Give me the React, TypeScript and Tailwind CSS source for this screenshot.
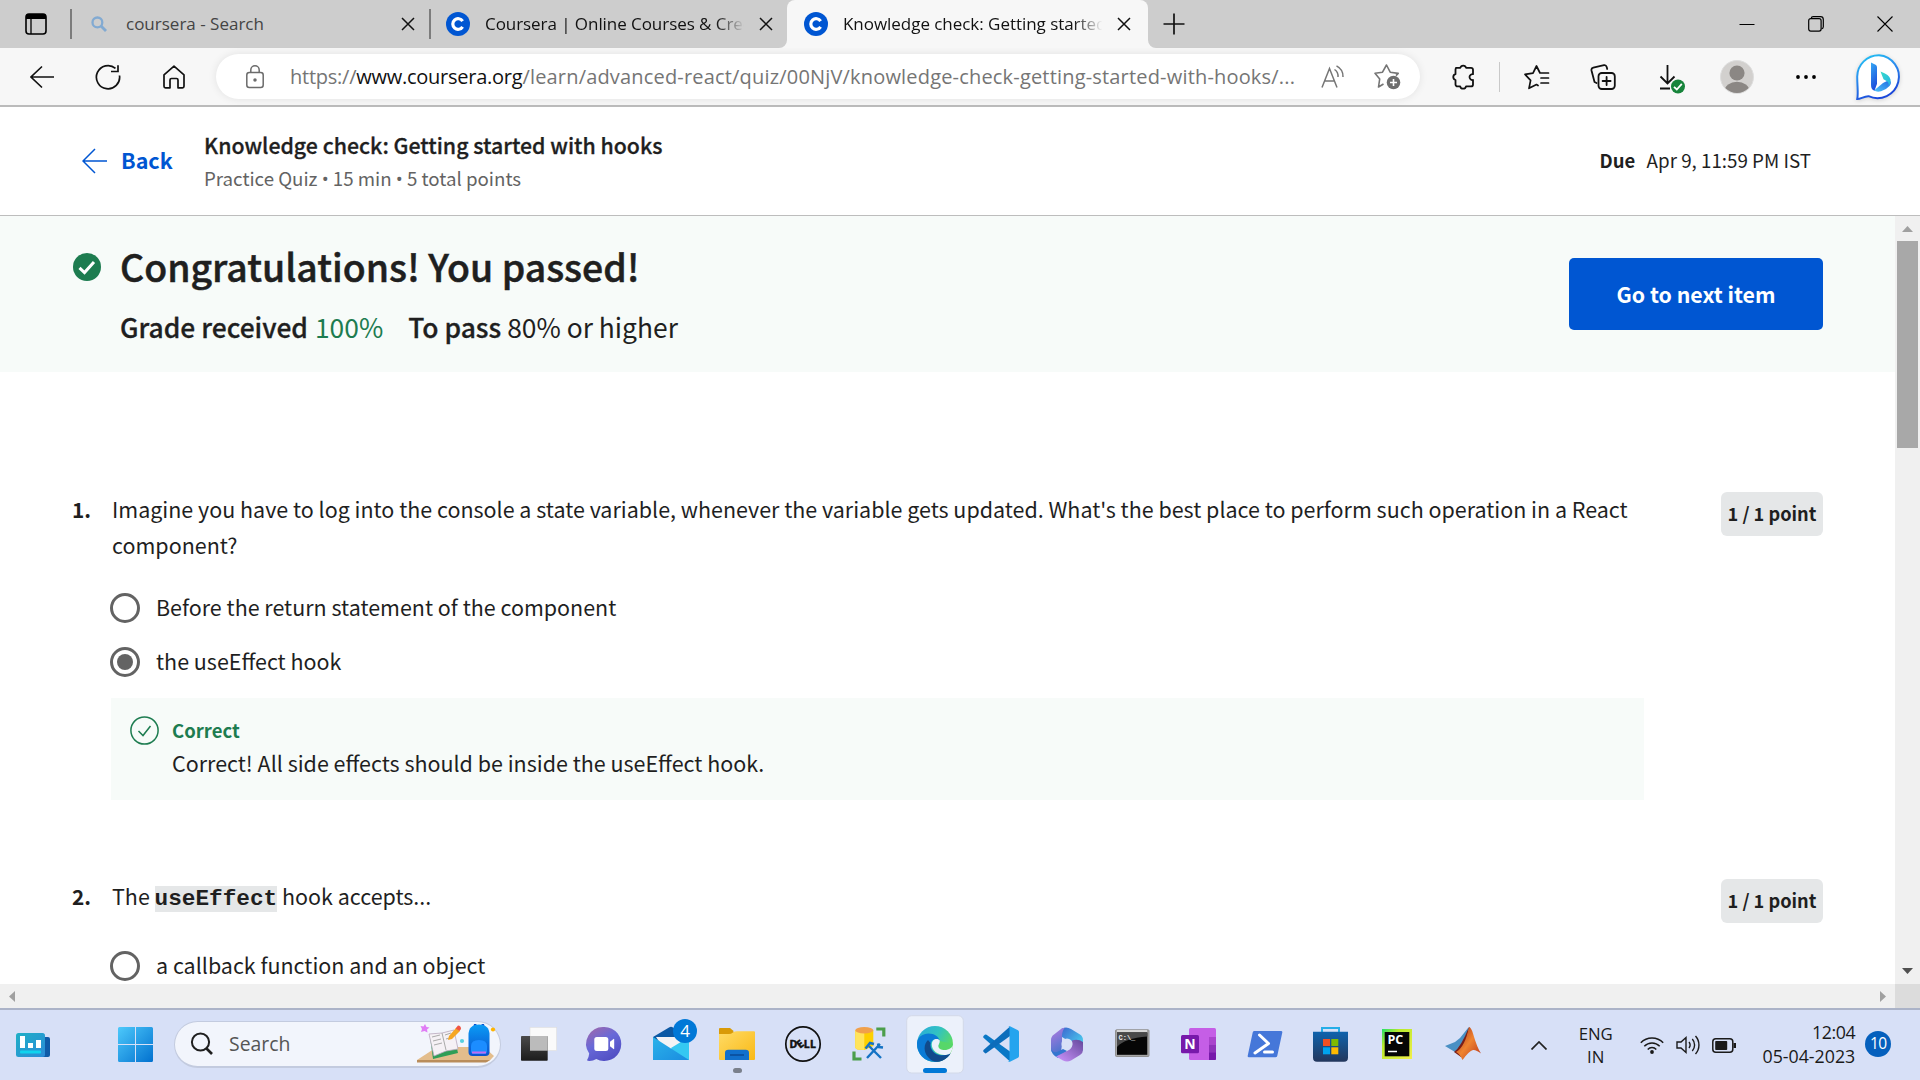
import type { ReactNode } from "react";

const X = ({ className = "" }: { className?: string }) => (
  <svg viewBox="0 0 14 14" className={`h-3.5 w-3.5 shrink-0 ${className}`} fill="none" stroke="#111" strokeWidth="1.5">
    <path d="M1 1l12 12M13 1L1 13" />
  </svg>
);

const CourseraIcon = () => (
  <svg viewBox="0 0 24 24" className="h-6 w-6 shrink-0">
    <circle cx="12" cy="12" r="12" fill="#0056d2" />
    <path d="M16.6 9.2A5.3 5.3 0 1 0 16.6 14.8" fill="none" stroke="#fff" strokeWidth="3.2" />
  </svg>
);

function TabStrip() {
  return (
    <div className="flex h-12 shrink-0 items-center bg-[#cdcdcd] text-[17px] text-[#111]">
      <svg viewBox="0 0 22 22" className="ml-[25px] h-[22px] w-[22px] shrink-0">
        <rect x="1" y="1" width="20" height="20" rx="3" fill="none" stroke="#000" strokeWidth="1.6" />
        <path d="M1 6V4a3 3 0 0 1 3-3h14a3 3 0 0 1 3 3v2z" fill="#000" />
        <path d="M6 6v15" stroke="#000" strokeWidth="1.3" />
      </svg>
      <div className="ml-[23px] h-[30px] w-0.5 bg-[#7c7c7c]" />
      <svg viewBox="0 0 16 16" className="ml-[19px] h-4 w-4 shrink-0" fill="none" stroke="#82aad2">
        <circle cx="6.4" cy="6.4" r="4.9" strokeWidth="2.3" />
        <path d="M10 10l5 5" strokeWidth="2.8" />
      </svg>
      <span className="ml-[19px] w-[275px] whitespace-nowrap leading-6 text-[#444]">coursera - Search</span>
      <X />
      <div className="ml-[14px] h-[30px] w-0.5 bg-[#7c7c7c]" />
      <div className="ml-[15px]"><CourseraIcon /></div>
      <span className="ml-[15px] w-[262px] overflow-hidden whitespace-nowrap leading-6 tracking-[-0.06px] [mask-image:linear-gradient(to_right,black_88%,transparent_99%)]">
        Coursera | Online Courses &amp; Credentials
      </span>
      <X className="ml-3" />
      <div className="relative ml-[14px] flex h-12 w-[361px] items-center rounded-t-lg bg-[#f7f7f7] pl-[17px]">
        <svg viewBox="0 0 8 8" className="absolute -left-2 bottom-0 h-2 w-2"><path d="M8 0v8H0a8 8 0 0 0 8-8" fill="#f7f7f7" /></svg>
        <svg viewBox="0 0 8 8" className="absolute -right-2 bottom-0 h-2 w-2"><path d="M0 0v8h8a8 8 0 0 1-8-8" fill="#f7f7f7" /></svg>
        <CourseraIcon />
        <span className="ml-[15px] w-[262px] overflow-hidden whitespace-nowrap leading-6 tracking-[-0.04px] [mask-image:linear-gradient(to_right,black_88%,transparent_99%)]">
          Knowledge check: Getting started with hooks
        </span>
        <X className="ml-[12px]" />
      </div>
      <svg viewBox="0 0 22 22" className="ml-[15px] h-[22px] w-[22px]" stroke="#111" strokeWidth="1.7"><path d="M11 0.5v21M0.5 11h21" /></svg>
      <div className="ml-auto flex items-center pr-[27px]">
        <svg viewBox="0 0 16 16" className="h-4 w-4" stroke="#000"><path d="M0.5 8.5h15" /></svg>
        <svg viewBox="0 0 16 16" className="ml-[53px] h-4 w-4" fill="none" stroke="#000" strokeWidth="1.2">
          <rect x="0.7" y="2.7" width="12.4" height="12.4" rx="2" />
          <path d="M3.2 2.4C3.4 1 4.3.7 5.2.7h7.3a2.8 2.8 0 0 1 2.8 2.8v7.3c0 1-.5 1.9-1.7 2" />
        </svg>
        <svg viewBox="0 0 16 16" className="ml-[53px] h-4 w-4" stroke="#000" strokeWidth="1.1"><path d="M.5.5l15 15M15.5.5l-15 15" /></svg>
      </div>
    </div>
  );
}

function Toolbar() {
  return (
    <div className="flex h-[59px] shrink-0 items-center border-b-2 border-[#bbb] bg-[#f7f7f7]">
      <svg viewBox="0 0 24 24" className="ml-[30px] h-6 w-6 shrink-0" fill="none" stroke="#111" strokeWidth="1.6"><path d="M12 1.5L1 12l11 10.5M1 12h23" /></svg>
      <svg viewBox="0 0 26 26" className="ml-[41px] h-[26px] w-[26px] shrink-0" fill="none" stroke="#111" strokeWidth="1.7">
        <path d="M24.5 11.5A11.6 11.6 0 1 1 20.5 4.3M23 1.200v6.300h-7" />
      </svg>
      <svg viewBox="0 0 22 24" className="ml-[42px] h-6 w-[22px] shrink-0" fill="none" stroke="#111" strokeWidth="1.7" strokeLinejoin="round">
        <path d="M1 9.8L11 1.2l10 8.6v11.5a1.5 1.5 0 0 1-1.500 1.500H15V15a1.500 1.500 0 0 0-1.500-1.500h-5A1.500 1.500 0 0 0 7 15v7.800H2.500A1.500 1.500 0 0 1 1 21.300z" />
      </svg>
      <div className="ml-[31px] flex h-[45px] w-[1204px] shrink-0 items-center rounded-full bg-white pl-[30px] shadow-[0_0_8px_rgba(0,0,0,0.09)]">
        <svg viewBox="0 0 18 24" className="h-6 w-[18px] shrink-0" fill="none" stroke="#6b6b6b" strokeWidth="1.5">
          <rect x=".8" y="7.5" width="16.4" height="15" rx="2.5" />
          <path d="M4.8 7.5V5a4.2 4.2 0 0 1 8.4 0v2.5" />
          <circle cx="9" cy="15" r="1" fill="#6b6b6b" />
        </svg>
        <div className="ml-[26px] w-[1007px] whitespace-nowrap text-[20px] leading-8 text-[#757575]">
          <span className="tracking-[-0.25px]">https://<span className="text-[#111]">www.coursera.org</span></span>
          <span className="tracking-[0.18px]">/learn/advanced-react/quiz/00NjV/knowledge-check-getting-started-with-hooks/...</span>
        </div>
        <svg viewBox="0 0 24 24" className="ml-[24px] h-6 w-6 shrink-0" fill="none" stroke="#757575" strokeWidth="1.5">
          <path d="M1 22.5L8.5 3.5 16 22.5M3.6 16h9.8M13.5 4.5a8 8 0 0 1 3.500 7.500M15.500.8A12 12 0 0 1 22 12" />
        </svg>
        <svg viewBox="0 0 27 27" className="ml-[29px] h-[27px] w-[27px] shrink-0" fill="none" stroke="#757575" strokeWidth="1.6" strokeLinejoin="round">
          <path d="M9.5 21l-5 3 1.2-8L1 10.3l7.5-1.1L12.5 2l3.700 7.200 8 1.200-2.200 2.200" />
          <circle cx="19.5" cy="19.5" r="6.8" fill="#6e6e6e" stroke="none" />
          <path d="M19.5 16v7M16 19.500h7" stroke="#fff" />
        </svg>
      </div>
      <svg viewBox="0 0 24 26" className="ml-[31px] h-[26px] w-6 shrink-0" fill="none" stroke="#111" strokeWidth="1.8" strokeLinejoin="round">
        <path d="M5 3.800h4.300a3 3 0 0 1 5.800 0H20a2 2 0 0 1 2 2v4.400a3 3 0 0 0-3.500 2.900 3 3 0 0 0 3.500 2.900v4.400a2 2 0 0 1-2 2h-5a3 3 0 0 1-5.800 0H6.500a2 2 0 0 1-2-2V16a3 3 0 0 1 0-5.800V5.500z" />
      </svg>
      <div className="ml-[24px] h-[30px] w-px bg-[#c9c9c9]" />
      <svg viewBox="0 0 26 26" className="ml-[24px] h-[26px] w-[26px] shrink-0" fill="none" stroke="#111" strokeWidth="1.7" strokeLinejoin="round" strokeLinecap="round">
        <path d="M14 21.500l-1.500-.9L5 24.300l1.600-8L1 10.300l8-1.200L12.500 2l3.500 7h8.500M17 14h7.500M17 19h7.500" />
      </svg>
      <svg viewBox="0 0 26 26" className="ml-[40px] h-[26px] w-[26px] shrink-0" fill="none" stroke="#111" strokeWidth="1.8" strokeLinecap="round">
        <path d="M6.500 19L4.500 18 1.500 6.500Q1 4.300 3.300 3.700L14 1.200Q16 .8 16.700 3l.5 2" />
        <rect x="8.500" y="9" width="16.300" height="16" rx="3.300" />
        <path d="M16.600 13v8M12.600 17h8" />
      </svg>
      <svg viewBox="0 0 26 30" className="ml-[43px] mt-1 h-[30px] w-[26px] shrink-0" fill="none" stroke="#111" strokeWidth="1.8">
        <path d="M8.500 1v18M1.500 12.500l7 7 7-7M1 24.500h10" />
        <circle cx="19" cy="22.500" r="7" fill="#17843b" stroke="none" />
        <path d="M15 22.800l2.800 2.700 5-5.700" stroke="#fff" strokeWidth="1.8" />
      </svg>
      <svg viewBox="0 0 34 34" className="ml-[35px] h-[34px] w-[34px] shrink-0">
        <clipPath id="avatar"><circle cx="17" cy="17" r="16" /></clipPath>
        <circle cx="17" cy="17" r="16.500" fill="#d2d0ce" stroke="#dedede" />
        <g clipPath="url(#avatar)" fill="#8b8784"><circle cx="17" cy="13" r="7.600" /><ellipse cx="17" cy="31" rx="12.500" ry="9.300" /></g>
      </svg>
      <svg viewBox="0 0 20 4" className="ml-[42px] h-1 w-5 shrink-0"><circle cx="2" cy="2" r="1.900" /><circle cx="10" cy="2" r="1.900" /><circle cx="18" cy="2" r="1.900" /></svg>
      <svg viewBox="0 0 46 46" className="ml-10 h-[46px] w-[46px] shrink-0 overflow-visible drop-shadow-sm">
        <defs>
          <linearGradient id="bingRing" x1="0" y1="0" x2=".4" y2="1"><stop stopColor="#20c7f2" /><stop offset=".45" stopColor="#2c92f0" /><stop offset="1" stopColor="#1b48da" /></linearGradient>
          <linearGradient id="bingB" x1="0" y1="0" x2=".3" y2="1"><stop stopColor="#35a8f4" /><stop offset="1" stopColor="#1c4fdc" /></linearGradient>
          <linearGradient id="bingC" x1="0" y1="0" x2="1" y2="1"><stop stopColor="#37dbc9" /><stop offset="1" stopColor="#22b3e6" /></linearGradient>
          <linearGradient id="bingD" x1="0" y1="1" x2="1" y2="0"><stop stopColor="#4cc4fa" /><stop offset="1" stopColor="#1f66e0" /></linearGradient>
        </defs>
        <path d="M23 1.200A21.500 21.500 0 1 1 12.500 42.200C8 42 4 45.500 1.200 45 2.500 40 1.200 32 1.200 22.500A21.700 21.700 0 0 1 23 1.200z" fill="#fff" stroke="url(#bingRing)" strokeWidth="2" />
        <path d="M18 36.500l9-7.500 6-3q3.500 2.500.5 6-3 3.500-8.500 5.200-4 1.200-7-.7z" fill="url(#bingD)" />
        <path d="M15 8.500l4.500 2.200q1.500.8 1.500 2.500v16.500l-2.500 7Q15 35.500 15 31z" fill="url(#bingB)" />
        <path d="M24.500 17.500q9 3 10 8 .6 4-2 6.500.8-3.500-2-5l-3-1.800z" fill="url(#bingC)" />
      </svg>
    </div>
  );
}

const Dot = () => <span className="[font-family:'Open_Sans',sans-serif]">•</span>;

function QuizHeader() {
  return (
    <div className="flex h-[109px] shrink-0 items-center border-b border-[#bdbdbd] bg-white pl-[82px] pr-[109px]">
      <svg viewBox="0 0 25 26" className="h-[26px] w-[25px] shrink-0" fill="none" stroke="#0056d2" strokeWidth="1.5"><path d="M13 1L1 13l12 12M1 13h24" /></svg>
      <span className="-mt-0.5 ml-[14px] w-[83px] text-[21.5px] font-bold leading-8 text-[#0056d2]">Back</span>
      <div>
        <h1 className="text-[21.3px] font-medium leading-8 [-webkit-text-stroke:0.3px]">Knowledge check: Getting started with hooks</h1>
        <p className="mt-[3px] text-[18.7px] leading-7 text-[#636363]">
          Practice Quiz <Dot /> 15 min <Dot /> 5 total points
        </p>
      </div>
      <p className="-mt-0.5 ml-auto flex text-[18.8px] leading-7">
        <span className="w-[47px] text-[18.5px] font-bold">Due</span>Apr 9, 11:59 PM IST
      </p>
    </div>
  );
}

function Banner() {
  return (
    <div className="flex h-[156px] shrink-0 items-center bg-[#f7fbf9] pl-[73px] pr-[72px]">
      <div className="flex h-full items-start pt-[26px]">
        <svg viewBox="0 0 28 28" className="mt-[11px] h-7 w-7 shrink-0"><circle cx="14" cy="14" r="14" fill="#1d7c50" /><path d="M6.500 14.800l5 4.700 9.500-10.500" fill="none" stroke="#fff" strokeWidth="3" /></svg>
        <div className="ml-[19px]">
          <h2 className="text-[37.4px] font-medium leading-[48px] [-webkit-text-stroke:0.5px]">Congratulations! You passed!</h2>
          <p className="mt-[19px] flex text-[26.4px] leading-9">
            <b className="mr-[7px] font-medium [-webkit-text-stroke:0.3px]">Grade received</b>
            <span className="mr-[25px] text-[#1d7c50]">100%</span>
            <b className="mr-[6px] font-medium [-webkit-text-stroke:0.3px]">To pass</b>
            <span>80% or higher</span>
          </p>
        </div>
      </div>
      <button className="ml-auto h-[72px] w-[254px] rounded-[5px] bg-[#0056d2] text-[21.3px] font-bold text-white">Go to next item</button>
    </div>
  );
}

function Option({ label, checked = false }: { label: string; checked?: boolean }) {
  return (
    <label className="-ml-0.5 flex h-[30px] items-center text-[21.48px]">
      <span className="flex h-[30px] w-[30px] shrink-0 items-center justify-center rounded-full border-[3px] border-[#636363]">
        {checked && <span className="h-4 w-4 rounded-full bg-[#636363]" />}
      </span>
      <span className="-mt-0.5 ml-4 leading-[30px]">{label}</span>
    </label>
  );
}

function Question({ n, prompt, children }: { n: number; prompt: ReactNode; children: ReactNode }) {
  return (
    <section className="flex shrink-0 items-start px-[72px] text-[21.48px] leading-9">
      <span className="w-[40px] shrink-0 pt-px text-[20.8px] font-bold">{n}.</span>
      <div className="w-[1532px]">
        <div className="pt-px">{prompt}</div>
        {children}
      </div>
      <div className="ml-auto mt-0.5 flex h-11 w-[102px] items-center justify-center rounded-md bg-[#e5e7e8] pb-0.5 text-[18.2px] font-bold">1 / 1 point</div>
    </section>
  );
}

function Page() {
  return (
    <div className="flex h-[768px] shrink-0 bg-white">
      <div className="flex w-[1895px] flex-col overflow-hidden">
        <Banner />
        <div className="h-[118px] shrink-0" />
        <Question n={1} prompt="Imagine you have to log into the console a state variable, whenever the variable gets updated. What's the best place to perform such operation in a React component?">
          <div className="mt-[30px] flex flex-col gap-6">
            <Option label="Before the return statement of the component" />
            <Option label="the useEffect hook" checked />
          </div>
          <div className="-ml-px mt-[21px] flex h-[102px] bg-[#f7fbf9] pl-[19px] pt-[18px]">
            <svg viewBox="0 0 29 29" className="h-[29px] w-[29px]" fill="none" stroke="#1d7c50" strokeWidth="1.5"><circle cx="14.5" cy="14.5" r="13.6" /><path d="M8.500 15l4.500 4.500 7.500-9.500" /></svg>
            <div className="ml-[13px]">
              <p className="text-[18.5px] font-bold leading-7 text-[#1d7c50]">Correct</p>
              <p className="mt-px">Correct! All side effects should be inside the useEffect hook.</p>
            </div>
          </div>
        </Question>
        <div className="h-[77px] shrink-0" />
        <Question
          n={2}
          prompt={<>The <code className="inline-block h-[26px] bg-[#e5e7e8] align-middle text-[22.7px] font-bold leading-[26px] [font-family:'Liberation_Mono',monospace]">useEffect</code> hook accepts...</>}
        >
          <div className="mt-[37px]"><Option label="a callback function and an object" /></div>
        </Question>
      </div>
      <div className="flex w-[25px] flex-col items-center bg-[#f0f0f0]">
        <svg viewBox="0 0 11 6" className="mt-2.5 h-1.5 w-[11px]"><path d="M0 6l5.500-6L11 6z" fill="#a0a0a0" /></svg>
        <div className="mt-[9px] h-[207px] w-[21px] bg-[#a8a8a8]" />
        <svg viewBox="0 0 11 6" className="mb-2.5 mt-auto h-1.5 w-[11px]"><path d="M0 0l5.500 6L11 0z" fill="#505050" /></svg>
      </div>
    </div>
  );
}

function BottomScroll() {
  return (
    <div className="flex h-6 shrink-0 items-center bg-[#f0f0f0] pl-[9px]">
      <svg viewBox="0 0 6 11" className="h-[11px] w-1.5"><path d="M6 0L0 5.500 6 11z" fill="#a0a0a0" /></svg>
      <svg viewBox="0 0 6 11" className="ml-auto mr-[9px] h-[11px] w-1.5"><path d="M0 0l6 5.500L0 11z" fill="#a0a0a0" /></svg>
      <div className="h-6 w-[25px] bg-[#dcdcdc]" />
    </div>
  );
}

const apps: ReactNode[] = [
  <>
    <rect x="24" y="17.3" width="26.7" height="23.4" fill="#fafafa" stroke="#ddd" strokeWidth=".6" />
    <rect x="15" y="26" width="26.7" height="24.7" rx=".8" fill="url(#tvDark)" />
    <rect x="24" y="26" width="17.7" height="14.7" fill="#bbb" />
  </>,
  <>
    <path d="M32.300 17a17 17 0 1 1-8 32q-4 2.400-8.600 1.800-1-.3-.4-1.200 1.600-2.600 1.900-6A17 17 0 0 1 32.300 17z" fill="url(#chat)" />
    <rect x="22.3" y="27" width="14" height="14" rx="2.5" fill="#fff" />
    <path d="M38 31.800l3.500-2.800q.7-.4.700.4v9.200q0 .8-.7.400L38 36.200z" fill="#fff" />
  </>,
  <>
    <path d="M15 27L31 17.500q2-1.300 4 0L51 27v8H15z" fill="#0c59a4" />
    <path d="M18 27h30l-6 12H26z" fill="#f3f3f5" />
    <path d="M51 27v23H38L33 38z" fill="#35c8f2" />
    <path d="M15 27l36 23H15z" fill="url(#mail)" />
    <circle cx="47" cy="21" r="12" fill="#0078d7" />
    <text x="47" y="27" textAnchor="middle" fontSize="17" fill="#fff">4</text>
  </>,
  <>
    <path d="M15 19q0-1 1-1h10l3 2.500 1.500 3.500H15z" fill="#d99a07" />
    <path d="M15 24h10q2 0 4-1.500 1.500-1.300 4-1.300h17q1 0 1 1V49q0 1-1 1H16q-1 0-1-1z" fill="url(#folder)" />
    <path d="M21 50v-7q0-3.300 3.300-3.300h17.400q3.300 0 3.300 3.300v7z" fill="#1170cc" />
    <path d="M26 45h14" stroke="#0a4a96" strokeWidth="1.5" />
    <rect x="29" y="58" width="9" height="5" rx="2.5" fill="#7a808c" />
  </>,
  <>
    <circle cx="33" cy="34" r="17.2" fill="none" stroke="#111" strokeWidth="1.7" />
    <g fontSize="10.5" fontWeight="700" fill="#111" stroke="#111" strokeWidth=".5">
      <text x="19.600" y="37.800">D</text>
      <text x="27" y="37.800" transform="rotate(-38 30 34)">E</text>
      <text x="33.800" y="37.800">L</text>
      <text x="40" y="37.800">L</text>
    </g>
  </>,
  <>
    <path d="M19.300 20v17.500q0 2.500 9 2.500l9-4V20z" fill="#fdd000" />
    <path d="M19.300 20v17.500q0 2.500 9 2.500V20z" fill="#ffe45c" />
    <ellipse cx="28.300" cy="20.200" rx="9" ry="3.200" fill="#f0a04b" />
    <path d="M40.300 19h7.500v7.500M18 41.500V49h7.500" fill="none" stroke="#4b9e4b" strokeWidth="3.2" />
    <path d="M31 48l13-14M33 36l12 12" stroke="#1573c4" strokeWidth="2.4" />
    <path d="M29.500 38.500l4.500-5.500 4 1M42 33.500l1 3.500 4 .5" fill="none" stroke="#1573c4" strokeWidth="2.5" />
  </>,
  <>
    <rect x="4.7" y="5.7" width="56.6" height="57.3" rx="5" fill="#ecf1fb" stroke="#d3d9e8" />
    <circle cx="33" cy="34" r="18" fill="url(#edgeTop)" />
    <path d="M15 33c.5-6 6-9.500 11.500-9.500 6 0 10.500 3 11.500 8-2-3.500-7.500-3-9 1-2 6 4 12.500 11 12.500 4 0 7-1.500 8.500-1.500C45 49 39 52 33 52a18 18 0 0 1-18-19z" fill="#0b7bd6" />
    <path d="M26 30c-4.500 4-4.500 12 0 17 3 3.500 6.500 5 9.500 4.800 5.500-.6 10-3.500 13-8.300-2 .4-4.500 2-8.500 2-7.500 0-13-6.500-11.500-12.500z" fill="#114a8b" />
    <path d="M37.800 30.500c.4 2.500-1.300 3.700-1.300 5 0 2.200 3.300 3.500 6.500 3.500 4 0 7-2 8-5.500 0 5-1.500 8-3 10-3 2.200-10 2.200-14.500-1.500-5-4-5-11.500 0-13 2-.4 3.800.3 4.300 1.500z" fill="#ecf1fb" />
    <path d="M51 34c0 3.500-4 6-8.500 6-3.500 0-6-1.500-6-3.500 0-1.500 1.700-2.500 1.400-5.500z" fill="#57d769" />
    <rect x="21" y="58" width="24" height="5" rx="2.5" fill="#0078d7" />
  </>,
  <>
    <path d="M42 41.500L18.500 24.800q-.9-.6-1.700 0l-1.300 1.200q-.8.9 0 1.800L42 51.500z" fill="#0a78c6" />
    <path d="M42 16.500L15.500 40q-.8.900 0 1.800l1.300 1.300q.8.600 1.700 0L42 26z" fill="#0c6dbb" />
    <path d="M42 16.300l8 3.900q1 .6 1 1.700v24.200q0 1.200-1 1.700l-8 3.900q-1.400.3-2.500-.7 2 .6 2-1.500V18q0-2-2-1.200 1.100-.9 2.500-.5z" fill="#25a4ee" />
  </>,
  <>
    <path d="M27 19q5-3 10 0l9 5.500q3 2 3 5.500v11L38 33l-10-6z" fill="url(#m365b)" />
    <path d="M27 19q3-1.500 4-1.500-3 3-3 9v8l-1 7-5 3.500q-5-2-5-6V30q0-3.500 3-5.500z" fill="url(#m365a)" />
    <path d="M17 38q1 5 6 4l6-3 4 2-9 7q-7-3.500-7-10z" fill="#3476cf" />
    <path d="M49 32v8q0 3-3 5l-9 5.500q-4 2-8 0L22 46.500l12-6q4-2 4-6v-4q6-2 11 1.500z" fill="url(#m365c)" />
    <circle cx="33" cy="34" r="5.6" fill="#d8e1f7" />
  </>,
  <>
    <rect x="15.5" y="19.8" width="33.5" height="26.7" rx="1" fill="#a5a5a5" stroke="#909090" />
    <path d="M17 21h30" stroke="#e9e9e9" strokeWidth="1.5" />
    <rect x="17" y="22.5" width="30.3" height="22.3" fill="#060606" />
    <path d="M17 22.500h30.300v4Q25 28 17 37z" fill="#494949" />
    <text x="18.5" y="30.3" fontSize="7" fontWeight="700" fill="#eee" className="[font-family:'Liberation_Mono',monospace]">C:\_</text>
  </>,
  <>
    <rect x="23" y="18" width="27" height="32" rx="1.5" fill="#c55ee6" />
    <path d="M43 27h7v7.700h-7z" fill="#aa44cc" /><path d="M43 34.700h7v7.600h-7z" fill="#8f32b9" /><path d="M43 42.300h7V49q0 1-1 1h-6z" fill="#7719aa" />
    <rect x="15" y="25" width="18" height="18.3" rx="1.5" fill="#7719aa" />
    <text x="24" y="39.2" fontSize="14" fontWeight="700" textAnchor="middle" fill="#fff">N</text>
  </>,
  <>
    <path d="M22 21h27q1.600 0 1.300 1.500l-5 23.300q-.3 1.500-2 1.500H17q-1.600 0-1.300-1.500l5-23.300Q21 21 22 21z" fill="#4577d9" />
    <path d="M27.500 25l9 8.500-13.500 9.500M32.500 42h8" fill="none" stroke="#fff" strokeWidth="3" strokeLinecap="round" strokeLinejoin="round" />
  </>,
  <>
    <path d="M24 24v-6h17v6" fill="none" stroke="#25aee8" strokeWidth="2" />
    <path d="M15 21.700h35v26q0 4-4 4H19q-4 0-4-4z" fill="url(#store)" />
    <path d="M25 29h7v7h-7z" fill="#f25022" /><path d="M33.300 29h7v7h-7z" fill="#7fba00" /><path d="M25 37.300h7v7h-7z" fill="#00a4ef" /><path d="M33.300 37.300h7v7h-7z" fill="#ffb900" />
  </>,
  <>
    <rect x="18" y="19" width="30" height="30" fill="url(#pycharm)" />
    <rect x="20.700" y="22" width="24.600" height="24.300" fill="#050505" />
    <text x="23.5" y="34.3" fontSize="12.5" fontWeight="700" fill="#fff">PC</text>
    <path d="M24 41.500h9" stroke="#fff" strokeWidth="1.5" />
  </>,
  <>
    <path d="M15 36l10-4 5-4 8-10 2-1-9 22-6 3z" fill="#4a90c4" />
    <path d="M24 42q7-5 15-25-3 17-4 26l-4 4z" fill="#7c1f17" />
    <path d="M39 17q2 0 4 6.500 4 14 8 20-5-4-8-3.500-4 1-10.500 10Q30 44 26 42q9-5 13-25z" fill="url(#matlab)" />
  </>,
];

const Gradients = () => (
  <svg className="absolute h-0 w-0">
    <defs>
      <linearGradient id="tvDark" x2="0" y2="1"><stop stopColor="#4a4a4a" /><stop offset="1" stopColor="#1c1c1c" /></linearGradient>
      <linearGradient id="chat" x1="0" y1="0" x2=".6" y2="1"><stop stopColor="#a668a5" /><stop offset=".5" stopColor="#6869d8" /><stop offset="1" stopColor="#5250c4" /></linearGradient>
      <linearGradient id="mail" x2="1" y2="1"><stop stopColor="#2bb3ea" /><stop offset="1" stopColor="#1a8ce0" /></linearGradient>
      <linearGradient id="folder" x2="1" y2="1"><stop stopColor="#ffdb66" /><stop offset="1" stopColor="#f9b916" /></linearGradient>
      <linearGradient id="edgeTop" x2="1" y2=".6"><stop stopColor="#2aa9dc" /><stop offset=".5" stopColor="#31c2c2" /><stop offset="1" stopColor="#63e052" /></linearGradient>
      <linearGradient id="m365a" x2=".3" y2="1"><stop stopColor="#b47be0" /><stop offset="1" stopColor="#4b74ce" /></linearGradient>
      <linearGradient id="m365b" x2="1" y2="1"><stop stopColor="#3a66cf" /><stop offset="1" stopColor="#4fe3f5" /></linearGradient>
      <linearGradient id="m365c" x1="1" y1="0" x2="0" y2="1"><stop stopColor="#64489c" /><stop offset="1" stopColor="#cf96ff" /></linearGradient>
      <linearGradient id="store" x2="0" y2="1"><stop stopColor="#0f63ad" /><stop offset="1" stopColor="#23375c" /></linearGradient>
      <linearGradient id="pycharm" x2="1" y2="1"><stop stopColor="#21e06a" /><stop offset=".3" stopColor="#b8ea2c" /><stop offset="1" stopColor="#f2ef4b" /></linearGradient>
      <linearGradient id="matlab" x2="1" y2="1"><stop stopColor="#a32414" /><stop offset=".5" stopColor="#ef8430" /><stop offset="1" stopColor="#b8321a" /></linearGradient>
      <linearGradient id="win" x2="1" y2="1"><stop stopColor="#4dc9fb" /><stop offset="1" stopColor="#0271cf" /></linearGradient>
      <linearGradient id="widget" x2="1" y2="1"><stop stopColor="#1fb0c6" /><stop offset="1" stopColor="#2b8bd8" /></linearGradient>
      <linearGradient id="bag" x2="0" y2="1"><stop stopColor="#0a9cf5" /><stop offset="1" stopColor="#0b52d0" /></linearGradient>
    </defs>
  </svg>
);

function Taskbar() {
  return (
    <div className="flex h-[72px] shrink-0 items-center border-t-2 border-[#abb3c8] bg-[#d7e0f7] text-[#1a1a1a]">
      <Gradients />
      <svg viewBox="0 0 34 24" className="ml-4 h-6 w-[34px] shrink-0">
        <rect x="22" y="4" width="12" height="20" rx="2" fill="#0f5ba8" />
        <rect width="29" height="24" rx="2.5" fill="url(#widget)" />
        <path d="M4 3h5v12H4zM12 10h5v5h-5zM20 7h5v8h-5z" fill="#fff" />
        <rect x="4" y="17.5" width="21" height="3" rx="1" fill="#0fd4ee" />
      </svg>
      <svg viewBox="0 0 35 35" className="-mt-px ml-[68px] h-[35px] w-[35px] shrink-0">
        <path d="M0 1.500Q0 0 1.500 0H17v17H0zM18 0h15.500Q35 0 35 1.500V17H18zM0 18h17v17H1.500Q0 35 0 33.500zM18 18h17v15.500q0 1.500-1.500 1.500H18z" fill="url(#win)" />
      </svg>
      <div className="-mt-0.5 ml-[21px] flex h-[47px] w-[327px] shrink-0 items-center rounded-full border border-b-2 border-[#c3cbdf] bg-[#f2f5fc] pl-[15px]">
        <svg viewBox="0 0 23 23" className="h-[23px] w-[23px] shrink-0" fill="none" stroke="#1f1f1f" strokeWidth="2"><circle cx="10.5" cy="10" r="8.6" /><path d="M16.500 16.500l5.500 5.500" strokeWidth="2.6" /></svg>
        <span className="ml-4 text-[19.4px] leading-7 text-[#555]">Search</span>
        <svg viewBox="0 0 84 44" className="ml-auto mr-[-1px] mt-1 h-11 w-[84px] shrink-0">
          <path d="M0 36l20-13h47l10 9q-3 4-7 6H0z" fill="#e3bd8c" /><path d="M0 36h73l-4 2.500H0z" fill="#b98d5b" />
          <path d="M13 13l24-2 4 18-25 6z" fill="#2f9e57" /><path d="M12 10l13-1 12-3 4 19-12 2-12 5z" fill="#f5f1f5" stroke="#b9a8bd" strokeWidth=".8" />
          <path d="M25 9l4 17M15 13l8-2M16 17l8-2M17 21l8-2M28 11l6-2M29 15l7-2" stroke="#aaa" strokeWidth="1" />
          <path d="M31 16l1-4 7-8 4 3-8 8z" fill="#f5a623" /><path d="M38.500 4.500l2.500-3q3 0 3 3.500l-1.500 2z" fill="#f05545" />
          <path d="M8 0l1.500 3 3 .5-2.500 2 .5 3-3-1.500L4 8l1-3-1.500-3 3 .5z" fill="#e07cf5" />
          <circle cx="45" cy="17" r="2.1" fill="#55cfe0" /><circle cx="76" cy="5.500" r="2.1" fill="#ffb400" />
          <path d="M57.500 3q0-4.500 4.500-4.500T66.500 3" fill="none" stroke="#0b52d0" strokeWidth="2" />
          <path d="M51.500 11q0-10.500 10.500-10.500T72.500 11v17q0 4-4 4h-13q-4 0-4-4z" fill="url(#bag)" />
          <path d="M54 22q0-6 8-6t8 6v5q0 3-3 3H57q-3 0-3-3z" fill="#1c8dff" /><path d="M55 28.500h14" stroke="#c26cf0" strokeWidth="2" />
        </svg>
      </div>
      <div className="ml-[5px] flex">
        {apps.map((icon, i) => (
          <svg key={i} viewBox="0 0 66 70" className="h-[70px] w-[66px]">{icon}</svg>
        ))}
      </div>
      <svg viewBox="0 0 16 9" className="ml-[35px] h-[9px] w-4 shrink-0" fill="none" stroke="#222" strokeWidth="1.7"><path d="M.5 8.500L8 1l7.500 7.500" /></svg>
      <div className="ml-[21px] w-[56px] text-center text-[16.8px] leading-[23px]">ENG<br />IN</div>
      <svg viewBox="0 0 24 18" className="ml-[17px] h-[18px] w-6 shrink-0" fill="none" stroke="#1a1a1a" strokeWidth="1.5">
        <path d="M.8 6.800a15.500 15.500 0 0 1 22.400 0M4.300 10.200a10.700 10.700 0 0 1 15.400 0M7.700 13.400a6 6 0 0 1 8.600 0" /><circle cx="12" cy="16" r="1.9" fill="#1a1a1a" stroke="none" />
      </svg>
      <svg viewBox="0 0 25 20" className="ml-[12px] h-5 w-[25px] shrink-0" fill="none" stroke="#1a1a1a" strokeWidth="1.4">
        <path d="M1 7v6h4l5 4.500V2.500L5 7zM13 7a5 5 0 0 1 0 6M16.300 4a9 9 0 0 1 0 12M19.500 1a13.500 13.500 0 0 1 0 18" />
      </svg>
      <svg viewBox="0 0 24 15" className="ml-[11px] h-[15px] w-6 shrink-0">
        <rect x=".8" y=".8" width="20" height="13.4" rx="3" fill="none" stroke="#1a1a1a" strokeWidth="1.5" /><rect x="3.2" y="3" width="12" height="9" rx=".8" fill="#1a1a1a" /><path d="M21.500 5H24v5h-2.500z" fill="#1a1a1a" />
      </svg>
      <div className="-mt-[3px] ml-auto w-[120px] text-right text-[17.8px] leading-6">
        <div className="tracking-[-0.4px]">12:04</div>
        <div>05-04-2023</div>
      </div>
      <div className="-mt-0.5 ml-[10px] mr-[29px] flex h-[26px] w-[26px] items-center justify-center rounded-full bg-[#0560bd] text-[15.5px] tracking-[-0.8px] text-white">10</div>
    </div>
  );
}

export default function App() {
  return (
    <div className="flex h-[1080px] w-[1920px] flex-col overflow-hidden bg-white text-[#1f1f1f] [font-family:'Open_Sans',sans-serif]">
      <TabStrip />
      <Toolbar />
      <div className="flex shrink-0 flex-col [font-family:'Noto_Sans_CJK_SC',sans-serif]">
        <QuizHeader />
        <Page />
      </div>
      <BottomScroll />
      <Taskbar />
    </div>
  );
}
